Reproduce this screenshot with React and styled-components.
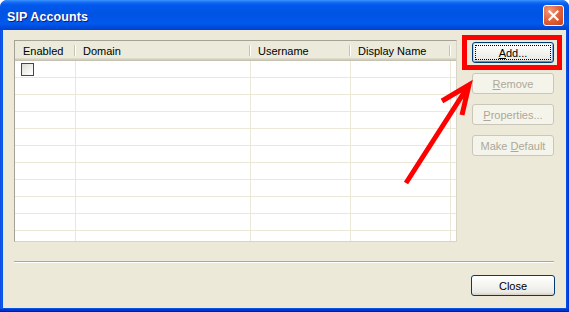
import React from "react";
import styled, { createGlobalStyle } from "styled-components";

const GlobalStyle = createGlobalStyle`
  html, body {
    margin: 0;
    padding: 0;
    background: #ffffff;
  }
  body {
    font-family: "Liberation Sans", Arial, sans-serif;
    font-size: 11px;
  }
`;

const columns = [
  { title: "Enabled", width: 61 },
  { title: "Domain", width: 175 },
  { title: "Username", width: 100 },
  { title: "Display Name", width: 100 },
];

const Window = styled.div`
  position: relative;
  width: 569px;
  height: 312px;
  display: flex;
  flex-direction: column;
  box-sizing: border-box;
  padding: 0 3px 4px 3px;
  border-radius: 7px 7px 0 0;
  background: linear-gradient(to right, #0831d9 0px, #166aee 1px, #0055e5 2px, #0055e5 566px, #0831d9 569px);
  box-shadow: inset 0 -1px 0 #001ea0, inset 0 -3px 0 #0030c8;
  overflow: hidden;
`;

const TitleBar = styled.div`
  height: 30px;
  flex: 0 0 30px;
  margin: 0 -3px;
  padding: 0 5px 0 7px;
  display: flex;
  align-items: center;
  justify-content: space-between;
  border-radius: 7px 7px 0 0;
  background: linear-gradient(
    to bottom,
    #3d95ff 0px,
    #1a6ff3 2px,
    #0058ee 5px,
    #0054e3 14px,
    #0058ee 24px,
    #0048d8 28px,
    #0040cc 30px
  );
`;

const Title = styled.span`
  color: #ffffff;
  font-family: "Liberation Sans", Arial, sans-serif;
  font-weight: bold;
  font-size: 12.5px;
  letter-spacing: 0.1px;
  text-shadow: 1px 1px 0 #0a1e80;
  padding-top: 3px;
`;

const CloseBox = styled.div`
  width: 21px;
  height: 21px;
  box-sizing: border-box;
  border: 1px solid #ffffff;
  border-radius: 3px;
  background: radial-gradient(circle at 30% 25%, #f29a7c 0%, #e2663f 45%, #c8401a 100%);
  display: flex;
  align-items: center;
  justify-content: center;
  margin-top: 1px;
`;

const Client = styled.div`
  position: relative;
  flex: 1;
  background: #ece9d8;
  box-sizing: border-box;
  padding: 10px 11px 0 11px;
  display: flex;
  flex-direction: column;
`;

const TopRow = styled.div`
  display: flex;
  gap: 15px;
`;

const List = styled.div`
  width: 443px;
  height: 202px;
  box-sizing: border-box;
  border: 1px solid #a5a196;
  border-right-color: #d8d4c6;
  border-bottom-color: #d8d4c6;
  background: #ffffff;
  overflow: hidden;
`;

const HeaderRow = styled.div`
  display: flex;
  height: 20px;
  background: #ebeadb;
  box-shadow: inset 0 -1px 0 #c5c2b2, inset 0 -2px 0 #d0cdbf, inset 0 -3px 0 #dedbcc;
`;

const HeaderCell = styled.div`
  position: relative;
  width: ${(p) => (p.$w ? `${p.$w}px` : "auto")};
  flex: ${(p) => (p.$w ? "none" : "1")};
  box-sizing: border-box;
  padding-left: ${(p) => (p.$first ? 8 : 7)}px;
  line-height: 20px;
  color: #000000;
  white-space: nowrap;

  &::after {
    content: "";
    display: ${(p) => (p.$w ? "block" : "none")};
    position: absolute;
    right: 1px;
    top: 4px;
    bottom: 5px;
    width: 1px;
    background: #c7c5b2;
    box-shadow: 1px 0 0 #ffffff;
  }
`;

const Row = styled.div`
  display: flex;
  height: 17px;
  box-sizing: border-box;
  border-bottom: 1px solid #ebe8d8;
`;

const Cell = styled.div`
  width: ${(p) => (p.$w ? `${p.$w}px` : "auto")};
  flex: ${(p) => (p.$w ? "none" : "1")};
  box-sizing: border-box;
  border-right: ${(p) => (p.$w ? "1px solid #ebe8d8" : "none")};
  padding: 2px 0 0 6px;
`;

const Check = styled.div`
  width: 13px;
  height: 13px;
  box-sizing: border-box;
  border: 1px solid #1c5180;
  background: linear-gradient(135deg, #dcdcd7 0%, #f4f4f0 60%, #ffffff 100%);
`;

const ButtonColumn = styled.div`
  display: flex;
  flex-direction: column;
  gap: 10px;
  padding-top: 2px;
`;

const Button = styled.div`
  position: relative;
  width: ${(p) => p.$w || 82}px;
  height: 21px;
  box-sizing: border-box;
  border: 1px solid ${(p) => (p.$disabled ? "#c9c7ba" : "#003c74")};
  border-radius: 3px;
  display: flex;
  align-items: center;
  justify-content: center;
  color: ${(p) => (p.$disabled ? "#aca899" : "#000000")};
  background: ${(p) =>
    p.$disabled
      ? "#f5f4ea"
      : "linear-gradient(to bottom, #ffffff 0%, #f6f6f3 40%, #ecebe6 85%, #d6d0c5 100%)"};
  box-shadow: ${(p) =>
    p.$default
      ? "inset 0 1px 0 #cee7ff, inset 1px 0 0 #bcd4f6, inset -1px 0 0 #89ade4, inset 0 -1px 0 #6982ee"
      : "none"};

  &::after {
    content: "";
    display: ${(p) => (p.$focus ? "block" : "none")};
    position: absolute;
    left: 2px;
    right: 2px;
    top: 2px;
    bottom: 2px;
    border: 1px dotted #000000;
  }

  u {
    text-decoration: underline;
    text-underline-offset: 1px;
  }
`;

const Separator = styled.div`
  margin-top: 19px;
  height: 1px;
  width: 540px;
  background: #aca899;
  box-shadow: 0 1px 0 #ffffff;
`;

const BottomRow = styled.div`
  display: flex;
  justify-content: flex-end;
  margin-top: 13px;
  margin-right: 0;
`;

const Highlight = styled.div`
  position: absolute;
  left: 459px;
  top: 5px;
  width: 100px;
  height: 35px;
  box-sizing: border-box;
  border: 5px solid #ff0000;
  pointer-events: none;
`;

const ArrowLayer = styled.svg`
  position: absolute;
  left: 0;
  top: 0;
  width: 569px;
  height: 312px;
  pointer-events: none;
`;

export default function App() {
  const rows = Array.from({ length: 11 });
  return (
    <>
      <GlobalStyle />
      <Window>
        <TitleBar>
          <Title>SIP Accounts</Title>
          <CloseBox>
            <svg width="13" height="13" viewBox="0 0 13 13">
              <path d="M2.5 2.5 L10.5 10.5 M10.5 2.5 L2.5 10.5" stroke="#ffffff" strokeWidth="2.2" strokeLinecap="square" />
            </svg>
          </CloseBox>
        </TitleBar>
        <Client>
          <TopRow>
            <List>
              <HeaderRow>
                {columns.map((c, i) => (
                  <HeaderCell key={c.title} $w={c.width} $first={i === 0}>
                    {c.title}
                  </HeaderCell>
                ))}
                <HeaderCell />
              </HeaderRow>
              {rows.map((_, r) => (
                <Row key={r}>
                  {columns.map((c, i) => (
                    <Cell key={c.title} $w={c.width}>
                      {r === 0 && i === 0 ? <Check /> : null}
                    </Cell>
                  ))}
                  <Cell />
                </Row>
              ))}
            </List>
            <ButtonColumn>
              <Button $default $focus>
                <span><u>A</u>dd...</span>
              </Button>
              <Button $disabled>
                <span><u>R</u>emove</span>
              </Button>
              <Button $disabled>
                <span><u>P</u>roperties...</span>
              </Button>
              <Button $disabled>
                <span>Make <u>D</u>efault</span>
              </Button>
            </ButtonColumn>
          </TopRow>
          <Separator />
          <BottomRow>
            <Button $w={84}>Close</Button>
          </BottomRow>
          <Highlight />
        </Client>
        <ArrowLayer viewBox="0 0 569 312">
          <path
            d="M406 183 L467 88 M442 101 L469 85 L462 115"
            fill="none"
            stroke="#ff0000"
            strokeWidth="5"
            strokeLinejoin="miter"
            strokeLinecap="butt"
          />
        </ArrowLayer>
      </Window>
    </>
  );
}
